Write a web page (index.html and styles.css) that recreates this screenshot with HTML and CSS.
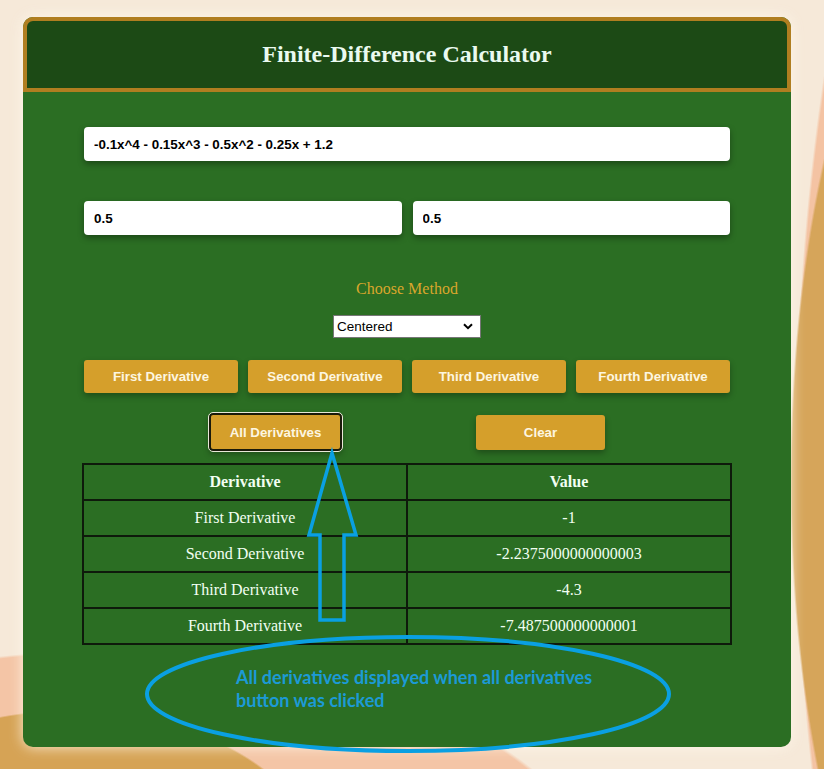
FILE: index.html
```html
<!DOCTYPE html>
<html>
<head>
<meta charset="utf-8">
<title>Finite-Difference Calculator</title>
<link rel="stylesheet" href="styles.css">
</head>
<body>
<div class="card">
  <header class="card-head">
    <h1 class="title">Finite-Difference Calculator</h1>
  </header>
  <main class="card-body">
    <input class="field" type="text" value="-0.1x^4 - 0.15x^3 - 0.5x^2 - 0.25x + 1.2">
    <div class="pair">
      <input class="field" type="text" value="0.5">
      <input class="field" type="text" value="0.5">
    </div>
    <p class="method-label">Choose Method</p>
    <div class="select-wrap">
      <select class="method">
        <option>Centered</option>
        <option>Forward</option>
        <option>Backward</option>
      </select>
      <svg class="chev" width="10" height="7" viewBox="0 0 10 7"><path d="M1 1.2 L5 5.2 L9 1.2" fill="none" stroke="#000" stroke-width="2"/></svg>
    </div>
    <div class="btn-grid">
      <button class="btn">First Derivative</button>
      <button class="btn">Second Derivative</button>
      <button class="btn">Third Derivative</button>
      <button class="btn">Fourth Derivative</button>
    </div>
    <div class="btn-row">
      <button class="btn btn-all">All Derivatives</button>
      <button class="btn btn-clear">Clear</button>
    </div>
    <table class="results">
      <colgroup><col class="half"><col class="half"></colgroup>
      <thead>
        <tr><th>Derivative</th><th>Value</th></tr>
      </thead>
      <tbody>
        <tr><td>First Derivative</td><td>-1</td></tr>
        <tr><td>Second Derivative</td><td>-2.2375000000000003</td></tr>
        <tr><td>Third Derivative</td><td>-4.3</td></tr>
        <tr><td>Fourth Derivative</td><td>-7.487500000000001</td></tr>
      </tbody>
    </table>
  </main>
</div>
<svg class="annot" width="824" height="769" viewBox="0 0 824 769">
  <path d="M332 453 L356 535 L344 535 L344 620 L320 620 L320 535 L309 535 Z" fill="none" stroke="#0aa0e2" stroke-width="3.5" stroke-linejoin="miter"/>
  <ellipse cx="408" cy="694" rx="261" ry="57" fill="none" stroke="#0aa0e2" stroke-width="4"/>
</svg>
<p class="note">All derivatives displayed when all derivatives<br>button was clicked</p>
</body>
</html>
```
FILE: styles.css
```css
html, body {
  margin: 0;
  padding: 0;
}
body {
  width: 824px;
  height: 769px;
  overflow: hidden;
  position: relative;
  background-color: #f6e9d9;
  background-image:
    radial-gradient(ellipse 215px 600px at 1005px 480px, #d6a55a 0 99%, transparent 100%),
    radial-gradient(ellipse 250px 850px at 1045px 470px, #f4c3a3 0 99%, transparent 100%),
    radial-gradient(ellipse 260px 175px at 70px 885px, #d6a355 0 99%, transparent 100%),
    radial-gradient(ellipse 500px 255px at 110px 905px, #f4c5a6 0 99%, transparent 100%);
  background-repeat: no-repeat;
  font-family: "Liberation Serif", "Times New Roman", serif;
}
.card {
  width: 768px;
  margin: 17px 0 0 23px;
  background: #2b6e23;
  border-radius: 10px;
  box-shadow: 0 0 14px rgba(255, 248, 235, 0.85);
  padding-bottom: 102px;
}
.card-head {
  height: 67px;
  background: #1c4a15;
  border: 4px solid #b07e20;
  border-radius: 10px 10px 0 0;
  display: flex;
  align-items: center;
  justify-content: center;
}
.title {
  margin: 0;
  font-family: "Liberation Serif", "Times New Roman", serif;
  font-weight: bold;
  font-size: 24px;
  color: #eafaf0;
}
.card-body {
  padding: 35px 61px 0;
  display: flex;
  flex-direction: column;
}
.field {
  box-sizing: border-box;
  height: 34px;
  border: none;
  border-radius: 4px;
  background: #fff;
  box-shadow: 0 3px 6px rgba(0, 0, 0, 0.35);
  padding: 0 10px;
  font-family: "Liberation Sans", Arial, sans-serif;
  font-weight: bold;
  font-size: 13.4px;
  color: #000;
  outline: none;
}
.pair {
  margin-top: 40px;
  display: grid;
  grid-template-columns: 1fr 1fr;
  gap: 11px;
}
.method-label {
  margin: 45px 0 0;
  text-align: center;
  color: #d9a62c;
  font-size: 16px;
  line-height: 18px;
}
.select-wrap {
  position: relative;
  align-self: center;
  margin-top: 17px;
  width: 148px;
  height: 23px;
}
.method {
  appearance: none;
  -webkit-appearance: none;
  box-sizing: border-box;
  width: 148px;
  height: 23px;
  border: 1px solid #767676;
  border-radius: 0;
  background: #fff;
  padding: 0 0 0 3px;
  font-family: "Liberation Sans", Arial, sans-serif;
  font-size: 13.5px;
  color: #000;
}
.chev {
  position: absolute;
  right: 8px;
  top: 8px;
  pointer-events: none;
}
.btn-grid {
  margin-top: 22px;
  display: grid;
  grid-template-columns: repeat(4, 1fr);
  gap: 10px;
}
.btn {
  box-sizing: border-box;
  height: 33px;
  border: none;
  border-radius: 3px;
  background: #d59f2b;
  color: #fdf6e0;
  font-family: "Liberation Sans", Arial, sans-serif;
  font-weight: bold;
  font-size: 13.3px;
  box-shadow: 0 3px 6px rgba(0, 0, 0, 0.3);
  padding: 0;
}
.btn-row {
  margin-top: 20px;
  display: flex;
  justify-content: center;
  gap: 134px;
  align-items: center;
}
.btn-all {
  width: 133px;
  height: 38px;
  border: 2px solid #1a1a0a;
  outline: 1px solid #e8e8d8;
  outline-offset: 0;
  border-radius: 4px;
}
.btn-clear {
  width: 129px;
  height: 35px;
}
.results {
  width: calc(100% + 4px);
  margin: 12px -2px 0;
  border-collapse: collapse;
  color: #f2fff2;
  font-size: 16px;
  table-layout: fixed;
}
.half {
  width: 50%;
}
.results th, .results td {
  border: 2px solid #0e1a0b;
  height: 34px;
  padding: 0;
  text-align: center;
  font-weight: normal;
}
.results th {
  font-weight: bold;
}
.annot {
  position: absolute;
  left: 0;
  top: 0;
  pointer-events: none;
}
.note {
  position: absolute;
  left: 236px;
  top: 666px;
  margin: 0;
  font-family: Lato, "Open Sans", sans-serif;
  font-weight: bold;
  font-size: 18px;
  line-height: 23px;
  color: #1c9ad6;
}
```
